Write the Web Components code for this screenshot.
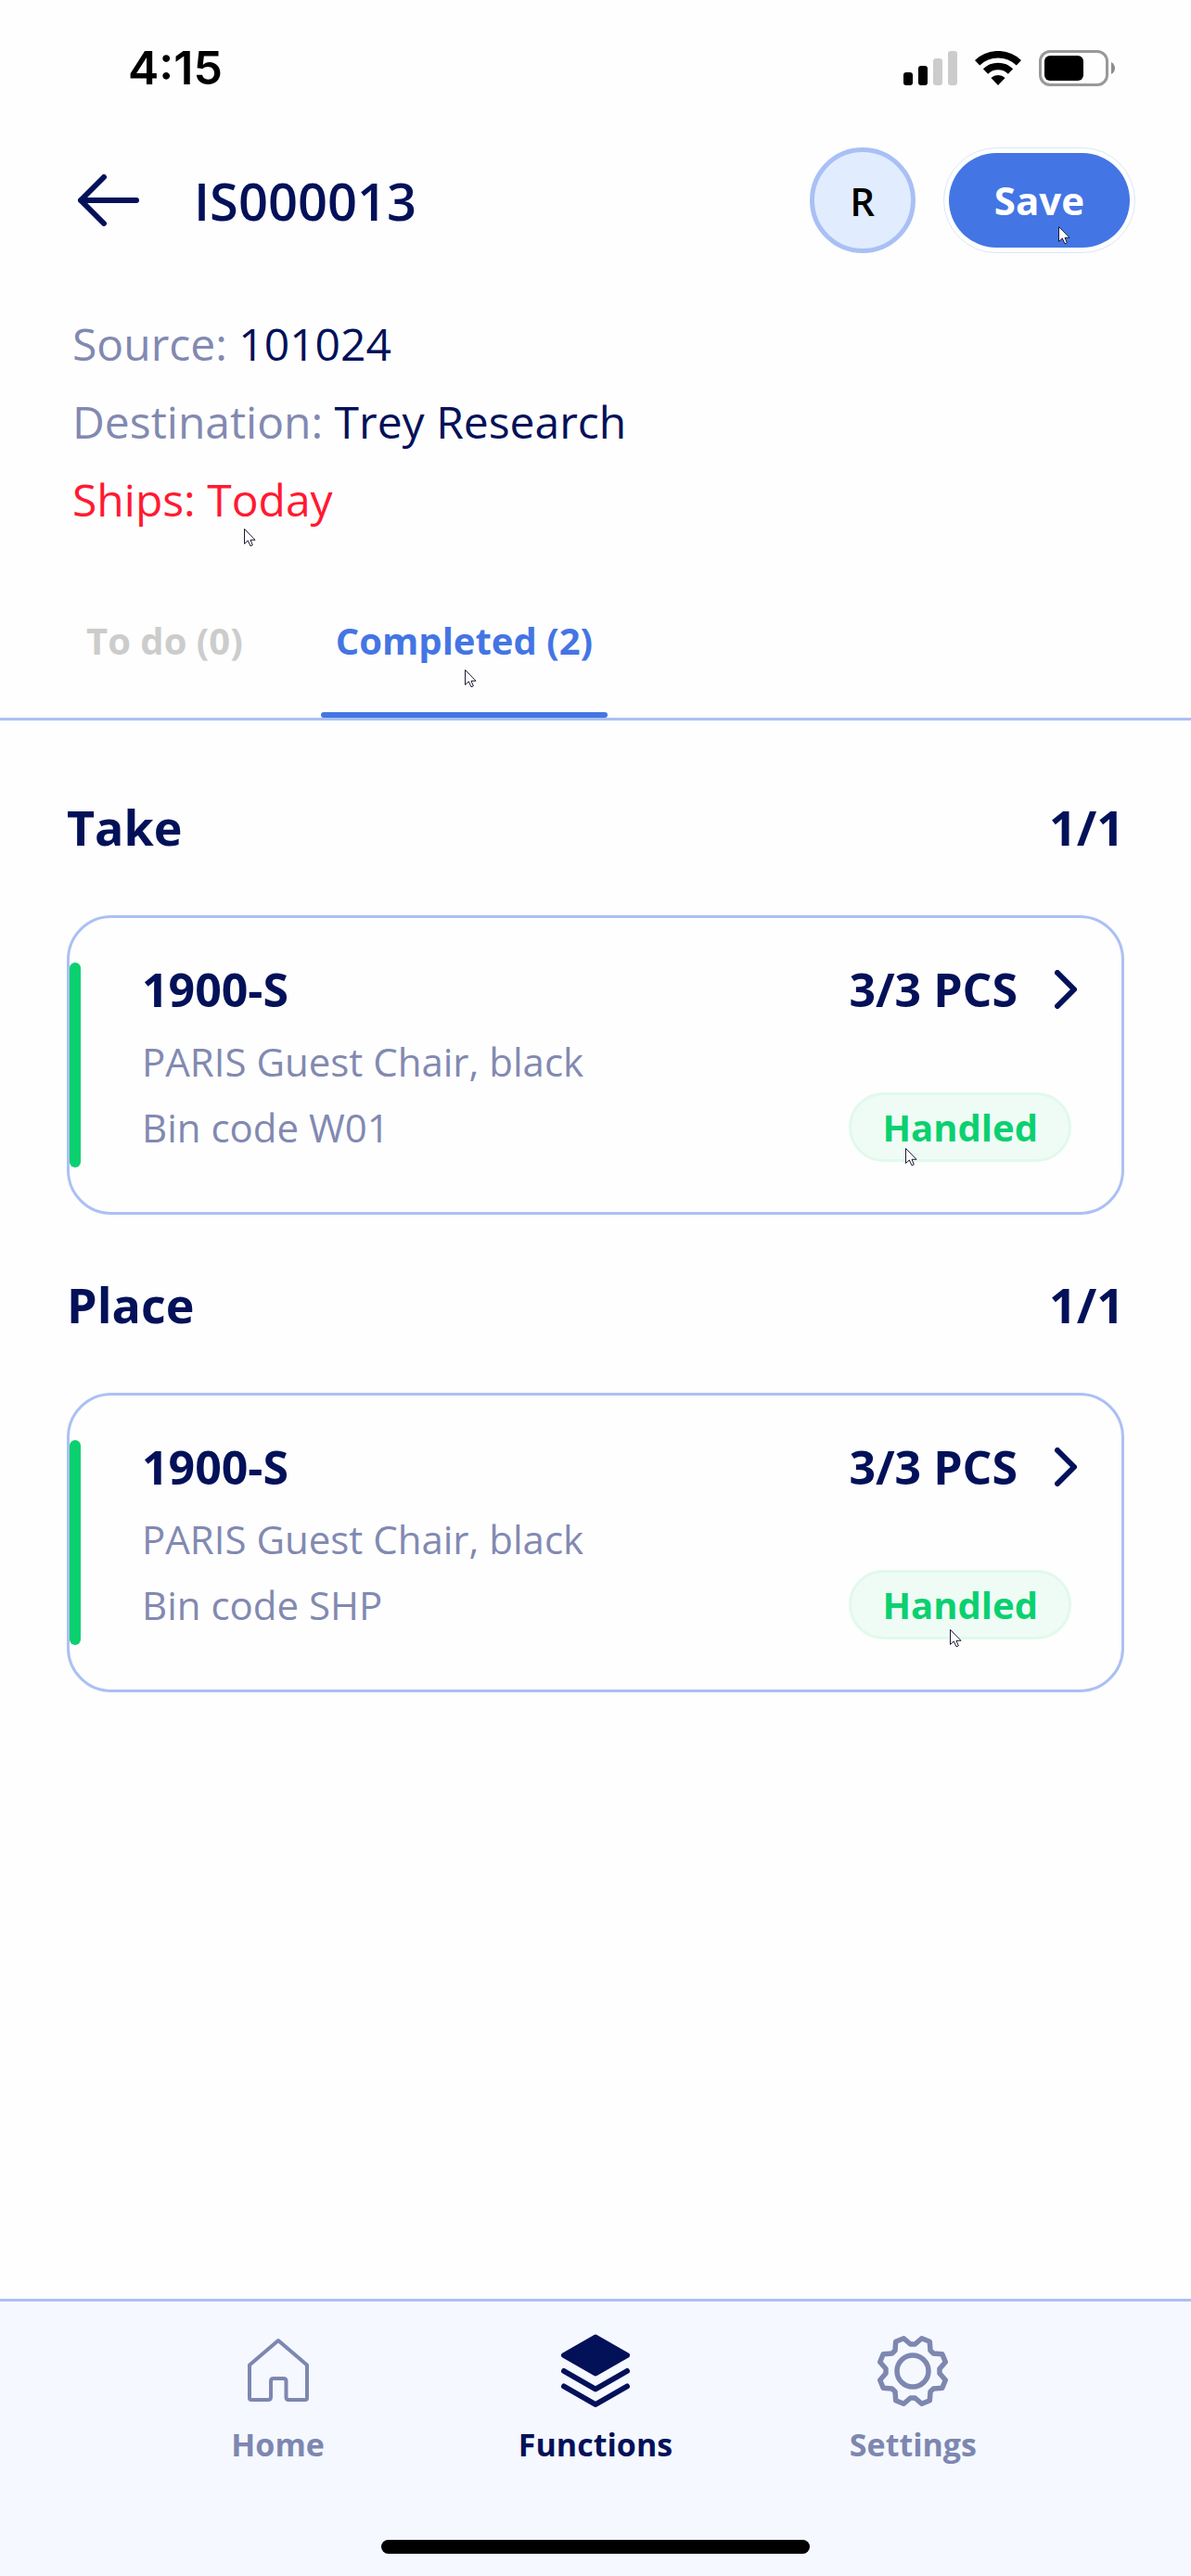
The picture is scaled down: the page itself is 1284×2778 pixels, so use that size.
<!DOCTYPE html>
<html lang="en">
<head>
<meta charset="utf-8">
<meta name="viewport" content="width=device-width, initial-scale=1">
<title>IS000013</title>
<style>
  :root {
    --navy: #031159; --muted: #8289b1; --nav-muted: #7d87b0; --blue: #4475e4; --line: #abc0f5;
    --red: #ff1a32; --green: #0bd070; --page: #fefefe;
    --fs-title: 56px; --fs-xl: 52px; --fs-code: 50px; --fs-l: 48px; --fs-m: 42px; --fs-tag: 40px; --fs-s: 34px;
  }
  body { margin: 0; background: var(--page); color: var(--navy); font-family: "Open Sans", "Noto Sans", sans-serif; }
</style>
</head>
<body>
<app-screen>
  <status-bar slot="top" time="4:15"></status-bar>
  <page-header slot="top" heading="IS000013" initial="R" action="Save"></page-header>
  <document-info>
    <info-line label="Source:">101024</info-line>
    <info-line label="Destination:">Trey Research</info-line>
    <info-line label="Ships:" urgent>Today<mouse-pointer style="--x:185px;--y:73px"></mouse-pointer></info-line>
  </document-info>
  <tab-strip>
    <tab-item>To do (0)</tab-item>
    <tab-item active>Completed (2)<mouse-pointer style="--x:155px;--y:61px"></mouse-pointer></tab-item>
  </tab-strip>
  <line-group heading="Take" count="1/1">
    <item-card code="1900-S" quantity="3/3 PCS" name="PARIS Guest Chair, black" bin="Bin code W01" status="Handled" style="--x:58px;--y:57px"></item-card>
  </line-group>
  <line-group heading="Place" count="1/1">
    <item-card code="1900-S" quantity="3/3 PCS" name="PARIS Guest Chair, black" bin="Bin code SHP" status="Handled" style="--x:106px;--y:61px"></item-card>
  </line-group>
  <bottom-nav slot="bottom">
    <nav-item icon="home">Home</nav-item>
    <nav-item icon="layers" active>Functions</nav-item>
    <nav-item icon="gear">Settings</nav-item>
  </bottom-nav>
</app-screen>

<script>
const icons = {
  home: `<path fill="none" stroke="currentColor" stroke-width="4" stroke-linejoin="round" d="M41 7 72 33.5V69q0 2-2 2H52q-2.5 0-2.5-3V51q0-3-3-3H36q-3 0-3 3v17q0 3-3 3H12q-2 0-2-2V33.5Z"/>`,
  layers: `<g fill="none" stroke="currentColor" stroke-width="6" stroke-linejoin="round" stroke-linecap="round"><path fill="currentColor" d="M41 3.5 75 23 41 42.5 7 23Z"/><path d="M7 40 41 59.5 75 40M7 56.500 41 76 75 56.500"/></g>`,
  gear: `<g transform="translate(41 40)" fill="none" stroke="currentColor" stroke-width="5.500" stroke-linejoin="round"><path d="M-2.500-29H2.500L9.700-35.300 18.300-31.800 19-22.300 22.300-19 31.800-18.300 35.300-9.700 29-2.500V2.500L35.300 9.700 31.800 18.300 22.300 19 19 22.300 18.300 31.800 9.700 35.300 2.500 29H-2.500L-9.700 35.300-18.300 31.800-19 22.300-22.300 19-31.800 18.300-35.300 9.700-29 2.500V-2.500L-35.300-9.700-31.800-18.300-22.300-19-19-22.300-18.300-31.800-9.700-35.300Z"/><circle r="17"/></g>`
};

function define(name, render) {
  customElements.define(name, class extends HTMLElement {
    constructor() {
      super();
      this.attachShadow({ mode: "open" });
    }
    connectedCallback() {
      this.shadowRoot.innerHTML = `<style>*{box-sizing:border-box}svg{display:block;flex:none}</style>` +
        render(key => this.getAttribute(key) ?? "");
    }
  });
}

define("app-screen", () => `
  <style>
    :host { display: flex; flex-direction: column; min-height: 100vh; }
    main { flex: 1; }
  </style>
  <slot name="top"></slot><main><slot></slot></main><slot name="bottom"></slot>`);

define("status-bar", a => `
  <style>
    :host { display: flex; justify-content: space-between; align-items: center; height: 146px; padding: 0 82px 0 138px; box-sizing: border-box; color: #000; }
    time { font: 600 50px/60px Inter, sans-serif; }
    div { display: flex; align-items: center; gap: 19px; }
  </style>
  <time>${a("time")}</time>
  <div>
    <svg width="58" height="37" viewBox="0 0 58 37" role="img" aria-label="Signal">
      <rect y="23" width="10" height="14" rx="3"/><rect x="16" y="16" width="10" height="21" rx="3"/>
      <rect x="32" y="8" width="10" height="29" rx="3" fill="#ccc"/><rect x="48" width="10" height="37" rx="3" fill="#ccc"/>
    </svg>
    <svg width="50" height="37" viewBox="0 0 50 37" role="img" aria-label="Wi-Fi">
      <g fill="none" stroke="#000" stroke-width="7.600"><path d="M2.600 12.800A32.200 32.200 0 0 1 47.400 12.800"/><path d="M11.500 22A19.500 19.500 0 0 1 38.500 22"/></g>
      <path d="M17.400 29.100A11 11 0 0 1 32.600 29.100L25 37Z"/>
    </svg>
    <svg width="82" height="39" viewBox="0 0 82 39" role="img" aria-label="Battery">
      <rect x="1.500" y="1.500" width="72" height="36" rx="10.500" fill="none" stroke="#999" stroke-width="3"/>
      <rect x="6" y="6" width="42" height="27" rx="6"/><path fill="#8c8c8c" d="M78 13q4 2.500 4 6.500t-4 6.500Z"/>
    </svg>
  </div>`);

define("page-header", a => `
  <style>
    :host { display: flex; align-items: center; padding: 13px 60px 13px 84px; }
    a { color: inherit; }
    h1 { flex: 1; margin: 0 0 0 59px; font-size: var(--fs-title); line-height: 72px; font-weight: 600; }
    .avatar { display: grid; place-items: center; width: 114px; height: 114px; margin-right: 30px; border: 5px solid #a9c0f5; border-radius: 50%; background: #e1ecff; color: #000; font-size: var(--fs-m); font-weight: 600; }
    .ring { position: relative; padding: 5px; border: 1px solid #dce6fc; border-radius: 57px; }
    button { display: block; height: 102px; padding: 0 49px; border: 0; border-radius: 51px; background: var(--blue); color: #fff; font: 700 var(--fs-m)/60px "Open Sans", sans-serif; }
  </style>
  <a href="#" aria-label="Back"><svg width="66" height="56" viewBox="0 0 66 56" fill="none" stroke="currentColor" stroke-width="6" stroke-linecap="round" stroke-linejoin="round"><path d="M63 28H3M28 3 3 28 28 53"/></svg></a>
  <h1>${a("heading")}</h1>
  <div class="avatar">${a("initial")}</div>
  <div class="ring"><button type="button">${a("action")}</button><mouse-pointer style="--x:123px;--y:84px"></mouse-pointer></div>`);

define("mouse-pointer", () => `
  <style>:host { position: absolute; left: var(--x); top: var(--y); pointer-events: none; }</style>
  <svg width="13" height="20" viewBox="0 0 13 20" aria-hidden="true"><path fill="#fff" stroke="#1b1b35" stroke-width="1" d="M.5.5V16.500L4.300 13 7 18.800 9.300 17.800 7 12.300H12Z"/></svg>`);

define("document-info", () => `
  <style>:host { display: block; padding: 43px 78px 0; }</style><slot></slot>`);

define("info-line", a => `
  <style>
    :host { display: block; position: relative; font-size: var(--fs-l); line-height: 84px; }
    span { color: var(--muted); }
    :host([urgent]), :host([urgent]) span { color: var(--red); }
  </style><span>${a("label")}</span> <slot></slot>`);

define("tab-strip", () => `
  <style>:host { display: flex; gap: 68px; margin-top: 80px; padding: 0 77px; border-bottom: 3px solid var(--line); }</style><slot></slot>`);

define("tab-item", () => `
  <style>
    :host { display: block; position: relative; }
    a { display: block; padding: 0 16px; color: #ccc; font-size: var(--fs-tag); line-height: 60px; font-weight: 700; text-decoration: none; }
    i { display: block; height: 6px; margin-top: 47px; border-radius: 3px; }
    :host([active]) a { color: var(--blue); }
    :host([active]) i { background: var(--blue); }
  </style><a href="#"><slot></slot></a><i></i>`);

define("line-group", a => `
  <style>
    :host { display: block; padding: 61px 72px 0; }
    :host(:first-of-type) { padding-top: 79px; }
    header { display: flex; justify-content: space-between; margin-bottom: 59px; }
    h2, b { margin: 0; font-size: var(--fs-xl); line-height: 72px; font-weight: 700; }
  </style>
  <header><h2>${a("heading")}</h2><b>${a("count")}</b></header><slot></slot>`);

define("item-card", a => `
  <style>
    :host { display: block; }
    .card { display: flex; padding: 48px 48px 48px 0; border: 3px solid var(--line); border-radius: 48px; color: inherit; text-decoration: none; }
    .bar { width: 12px; border-radius: 6px; background: var(--green); }
    .body { flex: 1; padding: 0 0 6px 66px; }
    .row { display: flex; align-items: center; justify-content: space-between; }
    .head { gap: 40px; font-size: var(--fs-code); line-height: 58px; font-weight: 700; }
    .head span:first-child { flex: 1; }
    .name, .bin { color: var(--muted); font-size: var(--fs-m); line-height: 66px; }
    .name { padding-top: 16px; }
    .pill { position: relative; margin-right: 6px; padding: 0 33px; border: 3px solid #e1f9ed; border-radius: 38px; background: #effcf6; color: var(--green); font-size: var(--fs-tag); line-height: 69px; font-weight: 700; }
  </style>
  <a class="card" href="#">
    <div class="bar"></div>
    <div class="body">
      <div class="row head"><span>${a("code")}</span><span>${a("quantity")}</span><svg width="24" height="42" viewBox="0 0 24 42" fill="none" stroke="currentColor" stroke-width="6" stroke-linecap="round" stroke-linejoin="round"><path d="M3 3 21 21 3 39"/></svg></div>
      <div class="name">${a("name")}</div>
      <div class="row"><span class="bin">${a("bin")}</span><span class="pill">${a("status")}<mouse-pointer></mouse-pointer></span></div>
    </div>
  </a>`);

define("bottom-nav", () => `
  <style>
    :host { display: block; padding-bottom: 24px; border-top: 3px solid var(--line); background: #f5f8ff; }
    nav { display: grid; grid-template-columns: repeat(3, 1fr); padding: 35px 10% 78px; }
    .grip { width: 36%; height: 15px; margin: 0 auto; border-radius: 8px; background: #000; }
  </style><nav><slot></slot></nav><div class="grip"></div>`);

define("nav-item", a => `
  <style>
    :host { display: block; color: var(--nav-muted); }
    :host([active]) { color: var(--navy); }
    a { display: flex; flex-direction: column; align-items: center; gap: 14px; color: inherit; font-size: var(--fs-s); line-height: 50px; font-weight: 700; text-decoration: none; }
  </style><a href="#"><svg width="80" height="80" viewBox="1 0 80 80" aria-hidden="true">${icons[a("icon")]}</svg><span><slot></slot></span></a>`);
</script>
</body>
</html>
